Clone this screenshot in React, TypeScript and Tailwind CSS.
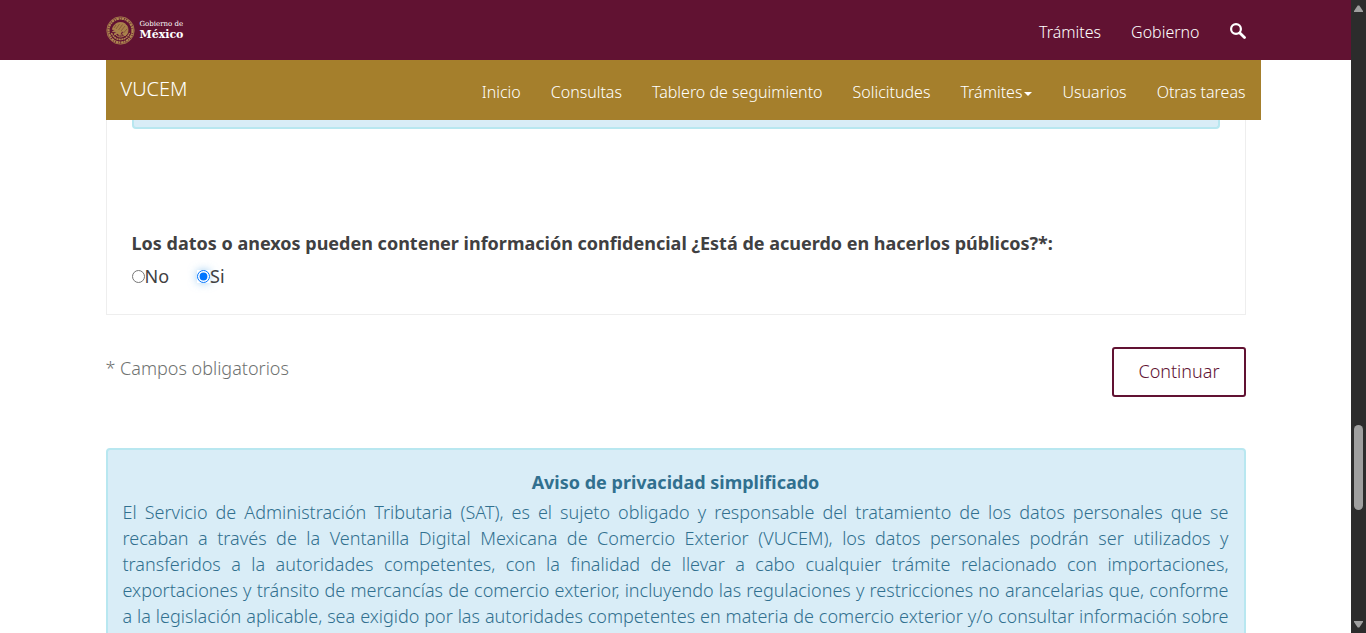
import { useState } from "react";

const siteLinks = ["Trámites", "Gobierno"];

const menu = [
  { label: "Inicio" },
  { label: "Consultas" },
  { label: "Tablero de seguimiento" },
  { label: "Solicitudes" },
  { label: "Trámites", caret: true },
  { label: "Usuarios" },
  { label: "Otras tareas" },
];

function Seal() {
  return (
    <svg viewBox="0 0 58 58" className="size-[29px]" aria-hidden="true" fill="none" stroke="#ae8850">
      <circle cx="29" cy="29" r="27.4" strokeWidth="1.6" />
      <circle cx="29" cy="29" r="24" strokeWidth="4.4" strokeDasharray="5 1.4 3 1" />
      <path
        d="M13 27c1-9 9-15 18-14 8 1 13 7 13 15 0 5-2 9-6 12l-5-4 3-6-5 1-3 7-5-3-7 3 5-6-8-1 7-3z"
        fill="#a88149"
        strokeWidth="1.6"
      />
      <path
        d="M20 18l-4 6M27 16l-7 10M33 17l-8 11M38 20l-8 10M42 26l-7 8"
        strokeWidth="1.2"
        stroke="#74402f"
      />
      <path d="M11 34c3 8 10 13 18 13s15-5 18-13" strokeWidth="3" strokeDasharray="4 1" />
      <path d="M17 34c3 5 7 8 12 8s9-3 12-8M25 38h8" strokeWidth="2" />
    </svg>
  );
}

function Logo() {
  return (
    <a href="#" aria-label="Gobierno de México" className="flex items-center gap-[5px] text-white">
      <Seal />
      <span className="flex flex-col font-['DejaVu_Serif',serif]">
        <span className="text-[7px] leading-[8px] font-normal">Gobierno de</span>
        <span className="text-[11px] leading-[13px] font-bold">México</span>
      </span>
    </a>
  );
}

function ScrollRail() {
  return (
    <div className="flex w-[15px] shrink-0 flex-col items-center bg-[#2c2c2c] py-[5px]" aria-hidden="true">
      <svg viewBox="0 0 9 7" className="h-[7px] w-[9px]" fill="#9f9f9f">
        <path d="M3.7.5h1.6L9 6v1H0V6z" />
      </svg>
      <div className="grow-[413]" />
      <div className="h-[85px] w-[9px] rounded-full bg-[#9f9f9f]" />
      <div className="grow-[111]" />
      <svg viewBox="0 0 9 7" className="h-[7px] w-[9px]" fill="#9f9f9f">
        <path d="M3.7 6.5h1.6L9 1V0H0v1z" />
      </svg>
    </div>
  );
}

export default function App() {
  const [publico, setPublico] = useState("si");

  return (
    <div className="flex h-screen overflow-hidden bg-white font-['Noto_Sans',sans-serif] text-[18px] leading-[26px] font-light text-[#404041]">
      <div className="flex min-w-0 flex-1 flex-col overflow-hidden">
        <header className="shrink-0">
          <div className="bg-[#611232]">
            <div className="mx-auto flex h-[60px] w-full max-w-[1140px] items-center justify-between">
              <Logo />
              <nav aria-label="Gobierno" className="flex items-center gap-[30px] pt-1 text-[16px] text-white">
                {siteLinks.map((label) => (
                  <a key={label} href="#">
                    {label}
                  </a>
                ))}
                <button type="button" aria-label="Buscar" className="pb-[2px]">
                  <svg viewBox="0 0 16 16" className="size-[16px]" fill="none" stroke="#fff">
                    <circle cx="6" cy="6" r="4.9" strokeWidth="2.2" />
                    <path d="M9.9 9.9l4.6 4.6" strokeWidth="2.8" strokeLinecap="round" />
                  </svg>
                </button>
              </nav>
            </div>
          </div>
          <div className="mx-auto w-full max-w-[1140px]">
            <div className="-mr-[15px] flex h-[60px] items-center justify-between bg-[#a57f2c] px-[15px] text-white">
              <a href="#" className="pb-[2px] text-[20px]">
                VUCEM
              </a>
              <nav aria-label="Menú principal" className="flex items-center gap-[30px] pt-1 text-[16px]">
                {menu.map(({ label, caret }) => (
                  <a key={label} href="#" className="flex items-center gap-[2px] whitespace-nowrap">
                    {label}
                    {caret && (
                      <svg viewBox="0 0 8 4" className="mt-[3px] h-[4px] w-[8px]" fill="currentColor" aria-hidden="true">
                        <path d="M0 0h8L4 4z" />
                      </svg>
                    )}
                  </a>
                ))}
              </nav>
            </div>
          </div>
        </header>

        <main className="mx-auto w-full max-w-[1140px]">
          <section className="border-x border-b border-[#eee] px-[25px] pb-[25px]">
            <div className="h-[9px] rounded-b border-x-2 border-b-2 border-[#b8e7f0] bg-[#d9edf7]" />
            <fieldset className="pt-[101px]">
              <legend className="contents font-bold">
                Los datos o anexos pueden contener información confidencial ¿Está de acuerdo en hacerlos públicos?*:
              </legend>
              <div className="flex gap-[28px] pt-[7px] font-normal">
                <label className="flex items-center">
                  <input
                    type="radio"
                    name="publico"
                    className="size-[13px]"
                    checked={publico === "no"}
                    onChange={() => setPublico("no")}
                  />
                  No
                </label>
                <label className="flex items-center">
                  <input
                    type="radio"
                    name="publico"
                    className="size-[13px] rounded-full checked:shadow-[0_0_8px_rgba(102,175,233,0.6)]"
                    checked={publico === "si"}
                    onChange={() => setPublico("si")}
                  />
                  Si
                </label>
              </div>
            </fieldset>
          </section>

          <div className="flex items-start justify-between pt-8">
            <p className="pt-2 text-[#6f7271]">* Campos obligatorios</p>
            <button
              type="button"
              className="rounded-[3px] border-2 border-[#611232] bg-white px-6 pt-[9px] pb-[11px] text-[#611232]"
            >
              Continuar
            </button>
          </div>

          <section className="mt-[51px] rounded border-2 border-[#b8e7f0] bg-[#d9edf7] px-[15px] py-[19px] text-[#31708f]">
            <h2 className="mb-1 text-center font-bold">Aviso de privacidad simplificado</h2>
            <p className="text-justify [text-align-last:justify]">
              El Servicio de Administración Tributaria (SAT), es el sujeto obligado y responsable del tratamiento de
              los datos personales que se recaban a través de la Ventanilla Digital Mexicana de Comercio Exterior
              (VUCEM), los datos personales podrán ser utilizados y transferidos a la autoridades competentes, con la
              finalidad de llevar a cabo cualquier trámite relacionado con importaciones, exportaciones y tránsito de
              mercancías de comercio exterior, incluyendo las regulaciones y restricciones no arancelarias que,
              conforme a la legislación aplicable, sea exigido por las autoridades competentes en materia de comercio
              exterior y/o consultar información sobre
            </p>
          </section>
        </main>
      </div>
      <ScrollRail />
    </div>
  );
}
